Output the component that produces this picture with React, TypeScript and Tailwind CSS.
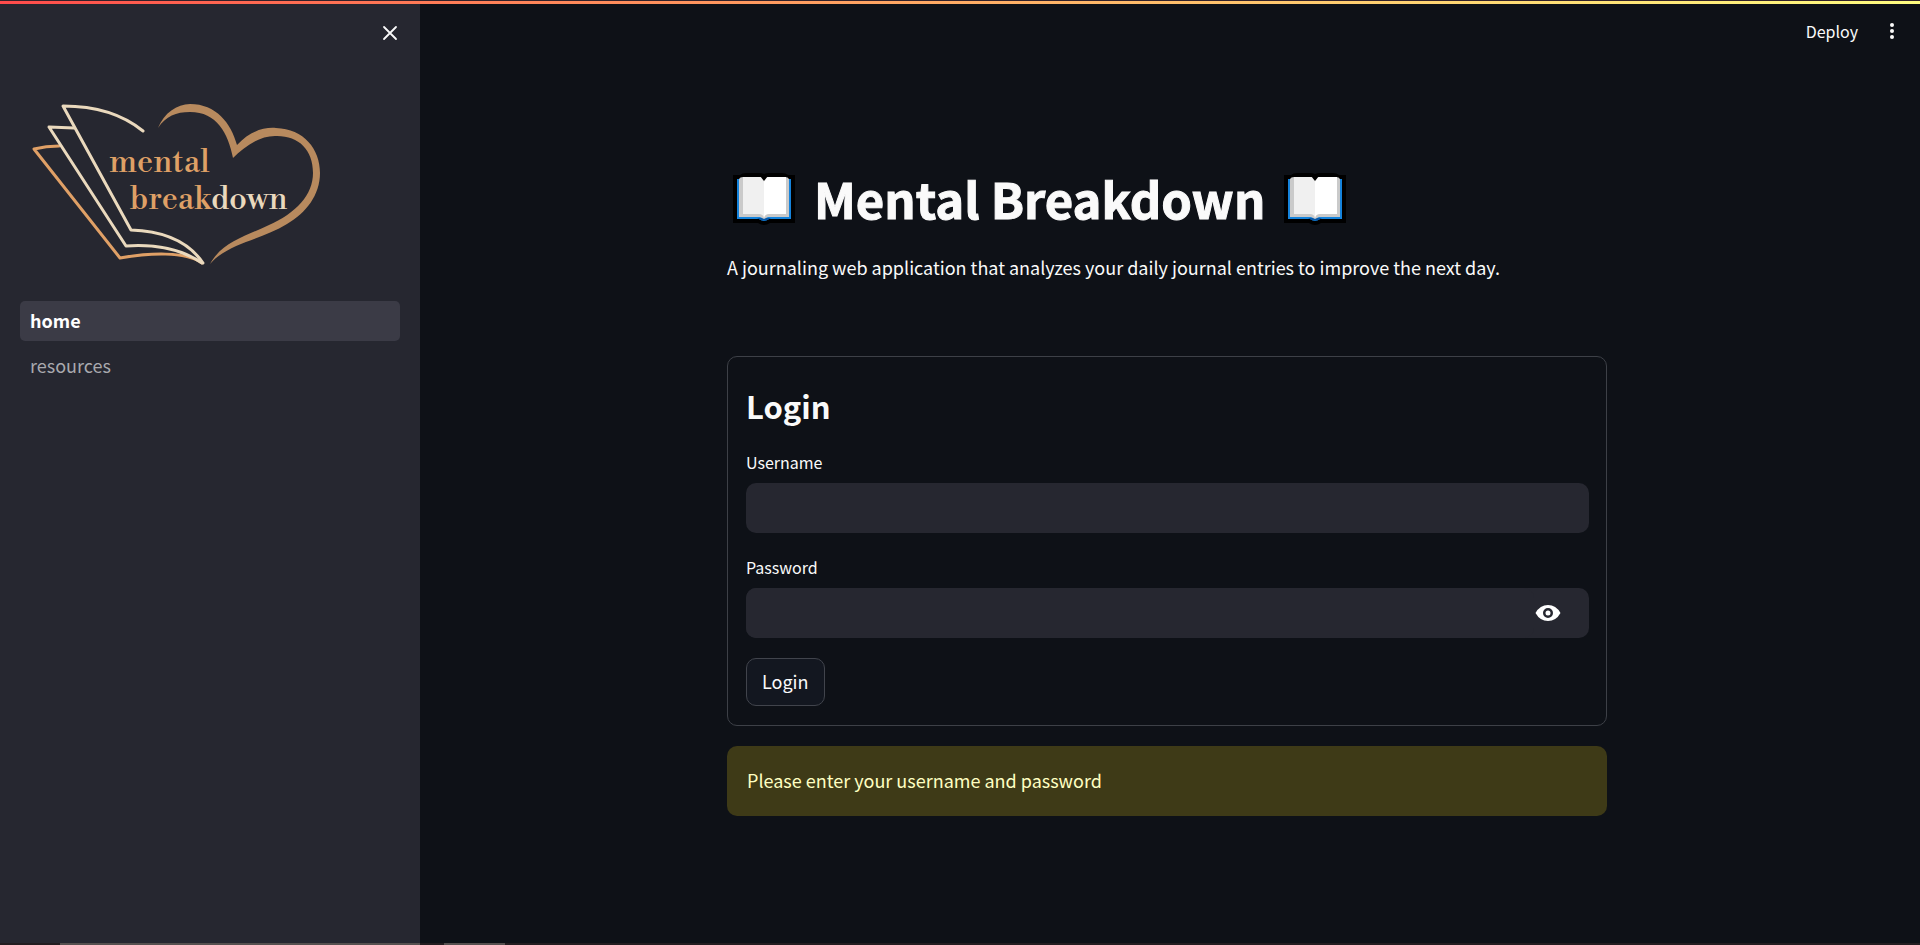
import { useState } from "react";

function Logo() {
  return (
    <svg viewBox="0 0 300 170" className="block h-[170px] w-[300px]" role="img" aria-label="mental breakdown" fill="none">
      <g strokeWidth="3" strokeLinecap="round" strokeLinejoin="round">
        <path d="M39 51 C32 51 22 52 14 54 L100 163 C129 158 165 156 182 168" stroke="#e0a066" />
        <path d="M54 33 L29 32 L106 151 C135 149 160 153 182 168" stroke="#ead9bd" />
        <path d="M123 36 C101 18 73 11 43 11 L111 135 C143 136 168 146 183 168" stroke="#ead9bd" />
      </g>
      <path
        d="M138 33 C144 18 157 9 170 9 C196 9 211 28 217 50 C230 36 244 32 256 33 C284 34 300 54 300 78 C300 100 286 118 267 129 C241 145 208 148 190 169 C202 147 226 141 249 130 C276 118 293 100 293 78 C293 55 279 41 257 41 C240 40 224 52 213 63 C208 38 197 17 170 17 C156 17 146 21 138 33 Z"
        fill="#b88a5e"
      />
      <g fontFamily="'Libre Bodoni','Liberation Serif',serif" fontSize="32">
        <text x="89" y="77" fill="#dfa066">mental</text>
        <text x="110" y="114" fill="#dfa066">break<tspan fill="#ead9bd">down</tspan></text>
      </g>
    </svg>
  );
}

function Book() {
  return (
    <svg viewBox="0 0 62 52" className="h-[52px] w-[62px]" role="img" aria-label="open book">
      <path d="M0 2 H7 Q9 0 13 0 H26 Q29 0 31 1 Q33 0 36 0 H49 Q53 0 55 2 H62 V50 H37 Q31 54 25 50 H0 Z" fill="#000" />
      <path d="M4 6 H58 V46 H36 Q31 50 26 46 H4 Z" fill="#1583dc" />
      <path d="M24 45 H38 Q31 50 24 45 Z" fill="#0758a8" />
      <path d="M6 6 Q7 4 10 4 H52 Q55 4 56 6 V44 H35 L31 46 L27 44 H6 Z" fill="#cacaca" />
      <path d="M10 4 H26 Q31 4 31 9 V45 Q30 41 26 41 H10 Z" fill="#f0f0f0" />
      <path d="M31 9 Q31 4 36 4 H53 V41 H36 Q32 41 31 45 Z" fill="#fff" />
      <path d="M27 3 L31 8 L35 3 Z" fill="#000" />
    </svg>
  );
}

const label = "block text-[16px] leading-[18px]";
const field = "h-[50px] w-full rounded-[10px] bg-[#262730] px-3 text-[18px] text-[#fafafa] outline-none";

export default function App() {
  const [visible, setVisible] = useState(false);
  return (
    <div className="relative flex min-h-screen flex-col bg-[#0e1117] font-['Noto_Sans_CJK_SC','Source_Sans_Pro',sans-serif] text-[#fafafa]">
      <div className="absolute inset-x-0 top-0 z-10 h-1 border-t border-[#33232b] bg-linear-to-r from-[#ff4b4b] to-[#fffd80]" />
      <div className="flex flex-1">
        <aside className="flex w-[420px] shrink-0 flex-col bg-[#262730] px-5">
          <div className="flex h-[66px] items-center justify-end">
            <button type="button" aria-label="Close sidebar" className="flex size-5 items-center justify-center">
              <svg viewBox="0 0 16 16" className="size-4" stroke="#fafafa" strokeWidth="1.8" strokeLinecap="round">
                <path d="M2 2 L14 14 M14 2 L2 14" />
              </svg>
            </button>
          </div>
          <div className="mt-[29px]"><Logo /></div>
          <nav className="mt-9 flex flex-col gap-[5px] text-[18px] leading-[38px]">
            <a href="#home" className="h-10 rounded-[5px] bg-[#3b3b46] px-[10px] font-bold text-white">home</a>
            <a href="#resources" className="h-10 rounded-[5px] px-[10px] text-[#a9a9ae]">resources</a>
          </nav>
        </aside>
        <div className="flex min-w-0 flex-1 flex-col">
          <header className="flex h-[62px] items-center justify-end gap-[26px] pr-5">
            <button type="button" className="text-[16px] leading-[24px]">Deploy</button>
            <button type="button" aria-label="Main menu" className="flex w-4 justify-center">
              <svg viewBox="0 0 16 20" className="h-5 w-4" fill="#fafafa">
                <circle cx="8" cy="4" r="2" /><circle cx="8" cy="10" r="2" /><circle cx="8" cy="16" r="2" />
              </svg>
            </button>
          </header>
          <main className="mx-auto w-full max-w-[886px] pr-[6px] pt-[101px]">
            <h1 className="flex h-[72px] items-center pl-[6px] text-[49px] font-bold leading-[72px]">
              <Book /><span className="px-[19px] pb-[3px] [-webkit-text-stroke:1px_#fafafa]">Mental Breakdown</span><Book />
            </h1>
            <p className="mt-[17px] text-[18px] leading-[30px]">
              A journaling web application that analyzes your daily journal entries to improve the next day.
            </p>
            <form className="mt-[74px] rounded-[10px] border border-[#3d4047] pt-[18px] pr-[17px] pb-[19px] pl-[18px]" onSubmit={(e) => e.preventDefault()}>
              <h2 className="mt-[11px] text-[31px] font-bold leading-[40px]">Login</h2>
              <div className="mt-[27px]">
                <label htmlFor="username" className={label}>Username</label>
                <input id="username" type="text" className={`${field} mt-3`} />
              </div>
              <div className="mt-[25px]">
                <label htmlFor="password" className={label}>Password</label>
                <div className="mt-3 flex h-[50px] items-center rounded-[10px] bg-[#262730] pr-[27px]">
                  <input id="password" type={visible ? "text" : "password"} className={field} />
                  <button type="button" aria-label="Show password" onClick={() => setVisible(!visible)} className="shrink-0">
                    <svg viewBox="0 0 28 20" className="h-5 w-7" fill="#fff">
                      <path fillRule="evenodd" d="M1.500 10 Q6 2 14 2 T26.500 10 Q22 18 14 18 T1.500 10 Z M14 5 A5 5 0 1 0 14 15 A5 5 0 1 0 14 5 Z M14 7.500 A2.500 2.500 0 1 1 14 12.500 A2.500 2.500 0 1 1 14 7.500 Z" />
                    </svg>
                  </button>
                </div>
              </div>
              <button type="submit" className="mt-5 block h-12 rounded-[10px] border border-[#41444c] bg-[#131720] px-[15px] pb-[2px] text-[18px] leading-[30px]">Login</button>
            </form>
            <div role="alert" className="mt-5 rounded-[10px] bg-[#3e3a17] px-5 pt-[19px] pb-[21px] text-[18px] leading-[30px] text-[#ffffc2]">
              Please enter your username and password
            </div>
          </main>
        </div>
      </div>
      <div className="flex h-[2px] bg-[#231d20]">
        <div className="ml-[60px] h-[2px] w-[360px] bg-[#55504f]" />
        <div className="ml-6 h-[2px] w-[61px] bg-[#55504f]" />
      </div>
    </div>
  );
}
